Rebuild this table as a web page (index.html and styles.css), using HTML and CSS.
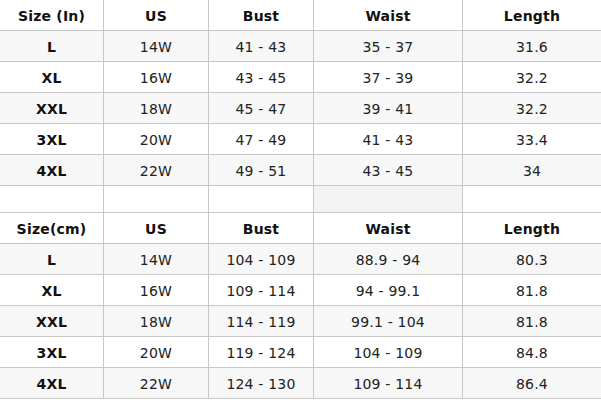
FILE: index.html
```html
<!DOCTYPE html>
<html>
<head>
<meta charset="utf-8">
<link rel="stylesheet" href="styles.css">
</head>
<body>
<table class="size-table">
  <colgroup>
    <col class="c1"><col class="c2"><col class="c3"><col class="c4"><col class="c5">
  </colgroup>
  <tbody>
    <tr class="head"><td>Size (In)</td><td>US</td><td>Bust</td><td>Waist</td><td>Length</td></tr>
    <tr class="alt"><td class="sz">L</td><td>14W</td><td>41 - 43</td><td>35 - 37</td><td>31.6</td></tr>
    <tr><td class="sz">XL</td><td>16W</td><td>43 - 45</td><td>37 - 39</td><td>32.2</td></tr>
    <tr class="alt"><td class="sz">XXL</td><td>18W</td><td>45 - 47</td><td>39 - 41</td><td>32.2</td></tr>
    <tr><td class="sz">3XL</td><td>20W</td><td>47 - 49</td><td>41 - 43</td><td>33.4</td></tr>
    <tr class="alt"><td class="sz">4XL</td><td>22W</td><td>49 - 51</td><td>43 - 45</td><td>34</td></tr>
    <tr class="spacer"><td></td><td></td><td></td><td class="shade"></td><td></td></tr>
    <tr class="head"><td>Size(cm)</td><td>US</td><td>Bust</td><td>Waist</td><td>Length</td></tr>
    <tr class="alt"><td class="sz">L</td><td>14W</td><td>104 - 109</td><td>88.9 - 94</td><td>80.3</td></tr>
    <tr><td class="sz">XL</td><td>16W</td><td>109 - 114</td><td>94 - 99.1</td><td>81.8</td></tr>
    <tr class="alt"><td class="sz">XXL</td><td>18W</td><td>114 - 119</td><td>99.1 - 104</td><td>81.8</td></tr>
    <tr><td class="sz">3XL</td><td>20W</td><td>119 - 124</td><td>104 - 109</td><td>84.8</td></tr>
    <tr class="alt"><td class="sz">4XL</td><td>22W</td><td>124 - 130</td><td>109 - 114</td><td>86.4</td></tr>
  </tbody>
</table>
</body>
</html>
```
FILE: styles.css
```css
html, body {
  margin: 0;
  padding: 0;
  background: #fff;
}
body {
  font-family: "DejaVu Sans", Verdana, sans-serif;
  font-size: 14px;
  letter-spacing: 0.2px;
  color: #222;
}
.size-table {
  border-collapse: collapse;
  table-layout: fixed;
  width: 602px;
  margin: -1px 0 0 -1px;
}
.c1 { width: 104px; }
.c2 { width: 105px; }
.c3 { width: 105px; }
.c4 { width: 149px; }
.c5 { width: 139px; }
.size-table td {
  border: 1px solid #c8c8c8;
  height: 31px;
  padding: 2px 0 0;
  text-align: center;
  vertical-align: middle;
  box-sizing: border-box;
}
.size-table .head td,
.size-table .sz {
  font-weight: bold;
  color: #111;
}
.size-table .alt td { background: #f7f7f7; }
.size-table .spacer td { height: 27px; }
.size-table .spacer .shade { background: #f3f3f3; }
```
